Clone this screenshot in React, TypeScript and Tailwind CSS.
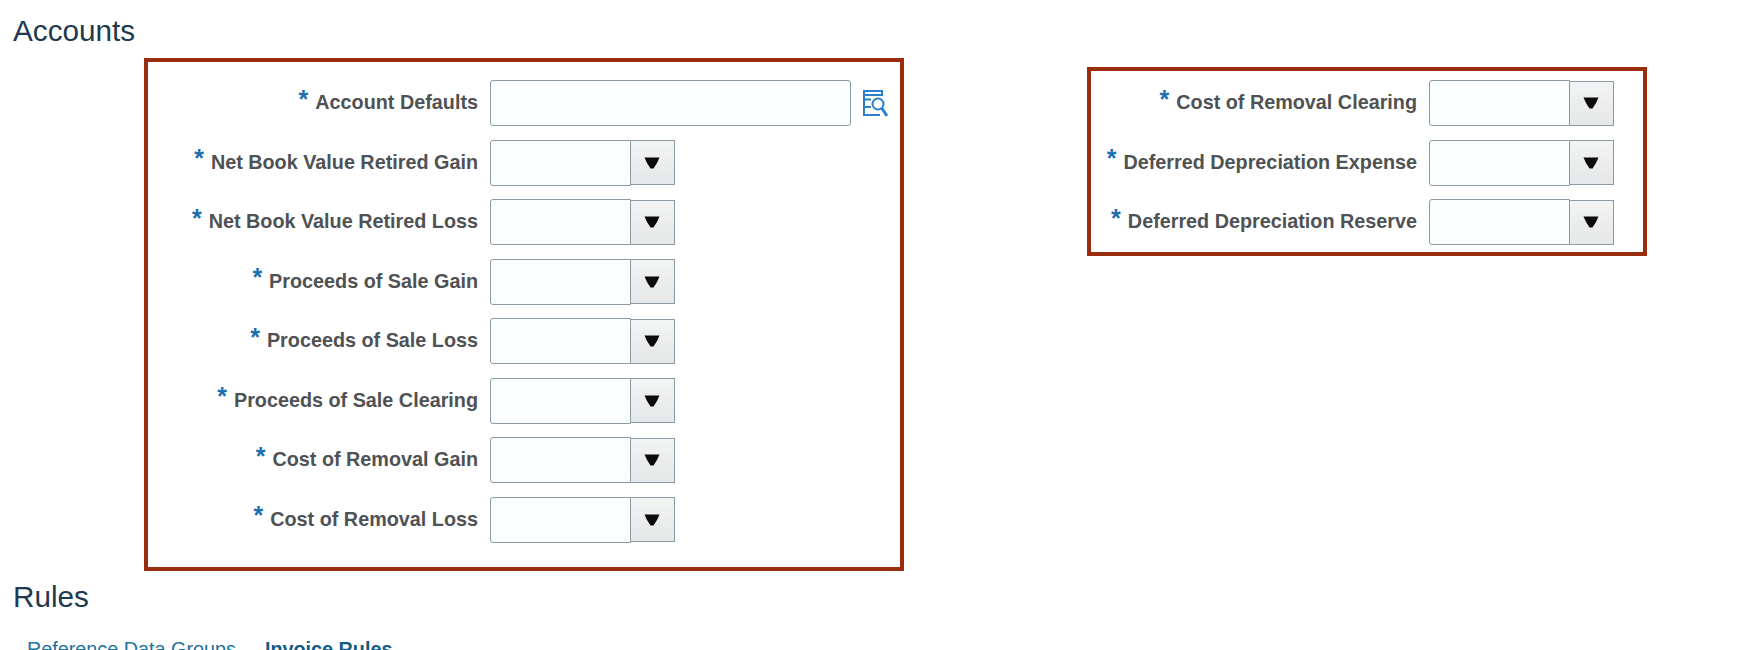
import React from 'react'

// label + text box row used in both bordered groups
function Label({ text, width }: { text: string; width: string }) {
  return (
    <div className={`${width} flex items-center justify-end gap-[7px] text-[19.8px] font-bold text-[#4f5254]`}>
      <span className="relative top-[-4px] text-[25px] leading-none font-bold text-[#1b6fae]">*</span>
      <span className="whitespace-nowrap">{text}</span>
    </div>
  )
}

function Arrow() {
  return (
    <svg width="16" height="12" viewBox="0 0 16 12">
      <path d="M0.5 0.5H15.5L13 6 9.5 11.5H6.5L3 6Z" fill="#0b0b0b" />
    </svg>
  )
}

function SelectField() {
  return (
    <div className="flex items-center">
      <div className="h-[46px] w-[141px] rounded-l-[3px] border border-[#8c9aa3] bg-[#fbfeff]" />
      <div className="flex h-[45px] w-[44px] items-center justify-center border border-l-0 border-[#8c9aa3] bg-gradient-to-b from-[#f3f4f4] to-[#e5e7e8] pr-[2px]">
        <Arrow />
      </div>
    </div>
  )
}

function LookupIcon() {
  return (
    <svg width="25" height="27" viewBox="0 0 25 27" fill="none" stroke="#2a80cc" strokeWidth="2">
      <path d="M1 1H19V5H1ZM1 5V25H17M1 9.5H8M1 17H8" />
      <circle cx="15" cy="14" r="5.5" />
      <path d="M19 18.5L24 26" strokeWidth="3" />
    </svg>
  )
}

const leftRows = [
  'Net Book Value Retired Gain',
  'Net Book Value Retired Loss',
  'Proceeds of Sale Gain',
  'Proceeds of Sale Loss',
  'Proceeds of Sale Clearing',
  'Cost of Removal Gain',
  'Cost of Removal Loss',
]

const rightRows = [
  'Cost of Removal Clearing',
  'Deferred Depreciation Expense',
  'Deferred Depreciation Reserve',
]

export default function App() {
  return (
    <div className="h-[650px] overflow-hidden bg-white font-['Liberation_Sans',Arial,sans-serif]">
      <h2 className="h-[51px] pt-[11px] pl-[13px] text-[29.7px] leading-[40px] font-normal text-[#20394f]">Accounts</h2>

      <div className="mt-[7px] flex items-start pl-[144px]">
        <div className="flex h-[513px] w-[760px] flex-col gap-y-[13.5px] border-4 border-[#982c0c] pt-[18px]">
          <div className="flex items-center gap-[12px]">
            <Label text="Account Defaults" width="w-[330px]" />
            <div className="h-[46px] w-[361px] rounded-[3px] border border-[#8c9aa3] bg-[#fbfeff]" />
            <LookupIcon />
          </div>
          {leftRows.map((row) => (
            <div key={row} className="flex items-center gap-[12px]">
              <Label text={row} width="w-[330px]" />
              <SelectField />
            </div>
          ))}
        </div>

        <div className="mt-[9px] ml-[183px] flex h-[189px] w-[560px] flex-col gap-y-[13.5px] border-4 border-[#982c0c] pt-[9px]">
          {rightRows.map((row) => (
            <div key={row} className="flex items-center gap-[12px]">
              <Label text={row} width="w-[326px]" />
              <SelectField />
            </div>
          ))}
        </div>
      </div>

      <h2 className="mt-[6px] pl-[13px] text-[29.7px] leading-[40px] font-normal text-[#20394f]">Rules</h2>

      <div className="mt-[20px] flex gap-[29px] pl-[27px] text-[19.8px] leading-[24px]">
        <span className="text-[#1f7299]">Reference Data Groups</span>
        <span className="font-bold text-[#145c84]">Invoice Rules</span>
      </div>
    </div>
  )
}
